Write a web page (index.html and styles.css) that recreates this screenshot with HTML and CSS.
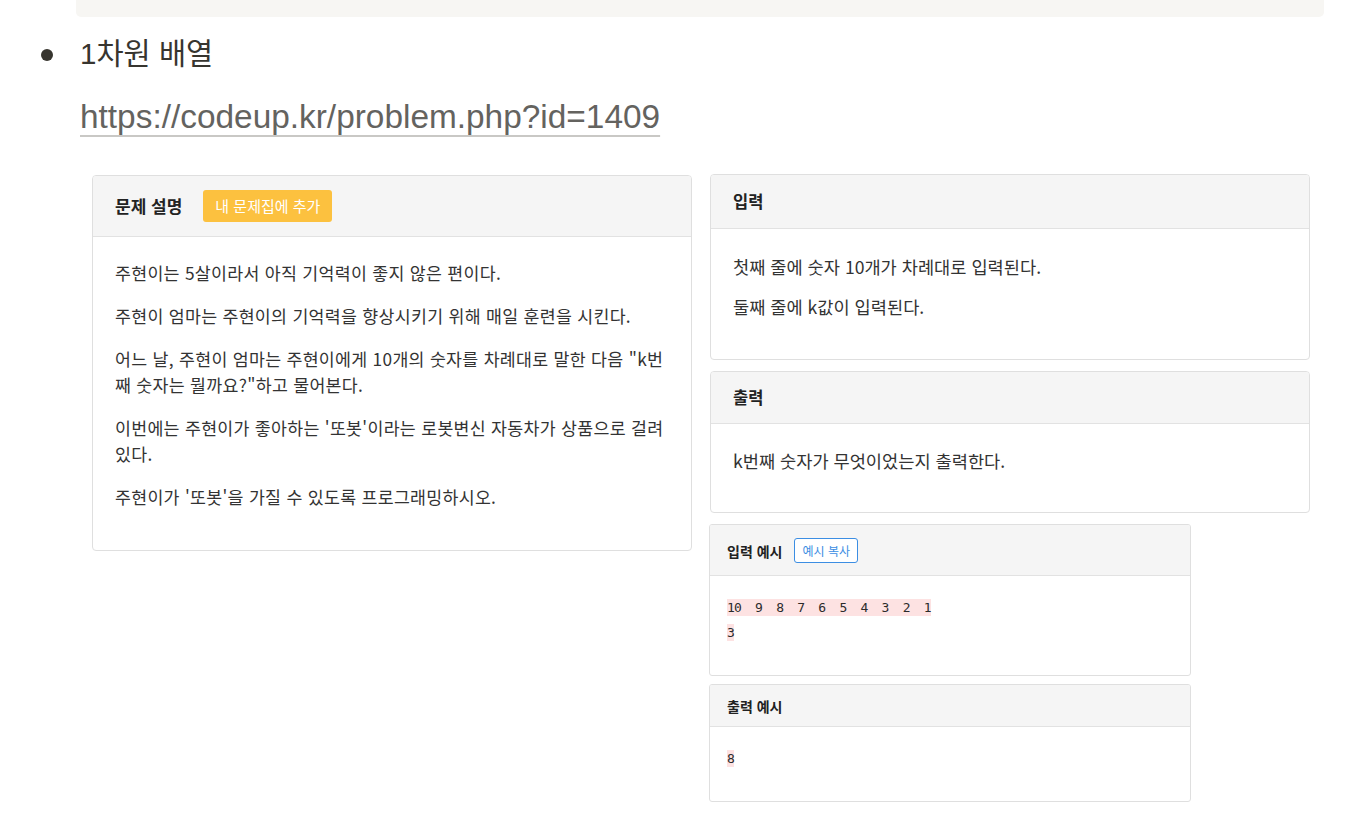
FILE: index.html
```html
<!DOCTYPE html>
<html lang="ko">
<head>
<meta charset="utf-8">
<title>1차원 배열</title>
<link rel="stylesheet" href="styles.css">
</head>
<body>
<div class="codeblock"></div>
<ul class="list">
  <li class="item">
    <span class="bullet-col"><span class="bullet"></span></span>
    <div class="item-content">
      <div class="item-title">1차원 배열</div>
      <p class="url-line"><a class="url" href="#">https://codeup.kr/problem.php?id=1409</a></p>
      <div class="embed">
        <div class="col-left">
          <section class="card card-desc">
            <header class="card-head head-desc">
              <h3 class="card-title title-desc">문제 설명</h3>
              <span class="badge">내 문제집에 추가</span>
            </header>
            <div class="card-body body-desc">
              <p>주현이는 5살이라서 아직 기억력이 좋지 않은 편이다.</p>
              <p>주현이 엄마는 주현이의 기억력을 향상시키기 위해 매일 훈련을 시킨다.</p>
              <p>어느 날, 주현이 엄마는 주현이에게 10개의 숫자를 차례대로 말한 다음 "k번째 숫자는 뭘까요?"하고 물어본다.</p>
              <p>이번에는 주현이가 좋아하는 '또봇'이라는 로봇변신 자동차가 상품으로 걸려 있다.</p>
              <p>주현이가 '또봇'을 가질 수 있도록 프로그래밍하시오.</p>
            </div>
          </section>
        </div>
        <div class="col-right">
          <section class="card card-io">
            <header class="card-head head-in">
              <h3 class="card-title">입력</h3>
            </header>
            <div class="card-body body-in">
              <p>첫째 줄에 숫자 10개가 차례대로 입력된다.</p>
              <p>둘째 줄에 k값이 입력된다.</p>
            </div>
          </section>
          <section class="card card-io">
            <header class="card-head head-out">
              <h3 class="card-title">출력</h3>
            </header>
            <div class="card-body body-out">
              <p>k번째 숫자가 무엇이었는지 출력한다.</p>
            </div>
          </section>
          <section class="card card-sample">
            <header class="sample-head sample-head-btn">
              <h4 class="sample-title">입력 예시</h4>
              <span class="copy-btn">예시 복사</span>
            </header>
            <div class="sample-body">
              <pre class="code"><span class="hl">10  9  8  7  6  5  4  3  2  1</span>
<span class="hl">3</span></pre>
            </div>
          </section>
          <section class="card card-sample">
            <header class="sample-head">
              <h4 class="sample-title">출력 예시</h4>
            </header>
            <div class="sample-body">
              <pre class="code"><span class="hl">8</span></pre>
            </div>
          </section>
        </div>
      </div>
    </div>
  </li>
</ul>
</body>
</html>
```

FILE: styles.css
```css
* { box-sizing: border-box; }

body {
  margin: 0;
  background: #ffffff;
  color: #37352f;
  font-family: "Liberation Sans", "Noto Sans CJK KR", sans-serif;
}

.codeblock {
  margin-left: 76px;
  width: 1248px;
  height: 17px;
  background: #f7f6f3;
  border-radius: 0 0 5px 5px;
}

.list {
  list-style: none;
  margin: 17px 0 0 0;
  padding: 0 0 0 40px;
}

.item {
  display: flex;
}

.bullet-col {
  width: 40px;
  height: 42px;
  flex: none;
  display: flex;
  align-items: center;
}

.bullet {
  width: 12px;
  height: 12px;
  margin-left: 1px;
  border-radius: 50%;
  background: #37352f;
}

.item-content {
  flex: 1;
  min-width: 0;
}

.item-title {
  font-size: 29.5px;
  line-height: 40px;
  color: #37352f;
}

.url-line {
  margin: 23px 0 0 0;
  font-size: 33.4px;
  line-height: 40px;
}

.url {
  color: #64635f;
  text-decoration: underline;
  text-decoration-color: #c9c8c5;
  text-decoration-thickness: 2px;
  text-underline-offset: 7px;
  text-decoration-skip-ink: none;
}

/* embedded problem page */
.embed {
  display: flex;
  gap: 18px;
  margin: 37px 0 0 12px;
  font-family: "Noto Sans CJK KR", sans-serif;
  color: #333333;
}

.col-left {
  width: 600px;
  flex: none;
  padding-top: 1px;
}

.col-right {
  width: 600px;
  flex: none;
  display: flex;
  flex-direction: column;
  align-items: flex-start;
}

.card {
  background: #ffffff;
  border: 1px solid #dfdfdf;
  border-radius: 4px;
  overflow: hidden;
}

.card-io {
  width: 600px;
  margin-bottom: 11px;
}

.card-head {
  display: flex;
  align-items: center;
  background: #f5f5f5;
  border-bottom: 1px solid #e2e2e2;
  padding: 0 22px;
}

.head-desc { padding-top: 14px; padding-bottom: 14px; }
.head-in { padding-top: 14px; padding-bottom: 15px; }
.head-out { padding-top: 13px; padding-bottom: 14px; }

.card-title {
  margin: 0;
  font-size: 16.5px;
  font-weight: 700;
  line-height: 24px;
  color: #222222;
}

.title-desc {
  font-size: 17px;
}

.badge {
  margin-left: 21px;
  height: 32px;
  line-height: 32px;
  padding: 0 12px;
  border-radius: 3px;
  background: #fcc13f;
  color: #ffffff;
  font-size: 15px;
}

.card-body {
  padding: 0 22px;
  font-size: 17.6px;
}

.card-body p {
  margin: 0 0 16px 0;
}

.body-desc {
  padding-top: 23px;
  padding-bottom: 23px;
  line-height: 26px;
  font-size: 17.3px;
  letter-spacing: 0.3px;
}

.body-desc p { margin-bottom: 17px; }

.body-in {
  padding-top: 26px;
  padding-bottom: 24px;
  line-height: 24px;
}

.body-out {
  padding-top: 25px;
  padding-bottom: 23px;
  line-height: 24px;
}

.card-sample {
  width: 482px;
  margin-left: -1px;
  margin-bottom: 8px;
  border-radius: 3px;
}

.sample-head {
  display: flex;
  align-items: center;
  background: #f5f5f5;
  border-bottom: 1px solid #e2e2e2;
  padding: 11px 17px;
  min-height: 42px;
}

.sample-head-btn {
  padding-top: 13px;
  padding-bottom: 12px;
}

.sample-title {
  margin: 0;
  font-size: 14px;
  font-weight: 700;
  line-height: 18px;
  color: #222222;
}

.copy-btn {
  margin-left: 12px;
  height: 25px;
  line-height: 23px;
  padding: 0 7px;
  border: 1px solid #3c8ee3;
  border-radius: 3px;
  color: #3c8ee3;
  font-size: 12px;
  background: #ffffff;
}

.sample-body {
  padding: 19px 17px 30px 17px;
}

.code {
  margin: 0;
  font-family: "DejaVu Sans Mono", monospace;
  font-size: 13px;
  letter-spacing: -0.8px;
  line-height: 25px;
  color: #2b2b2b;
  white-space: pre;
}

.hl {
  background: #fde2e2;
  padding: 1px 0;
}
```
